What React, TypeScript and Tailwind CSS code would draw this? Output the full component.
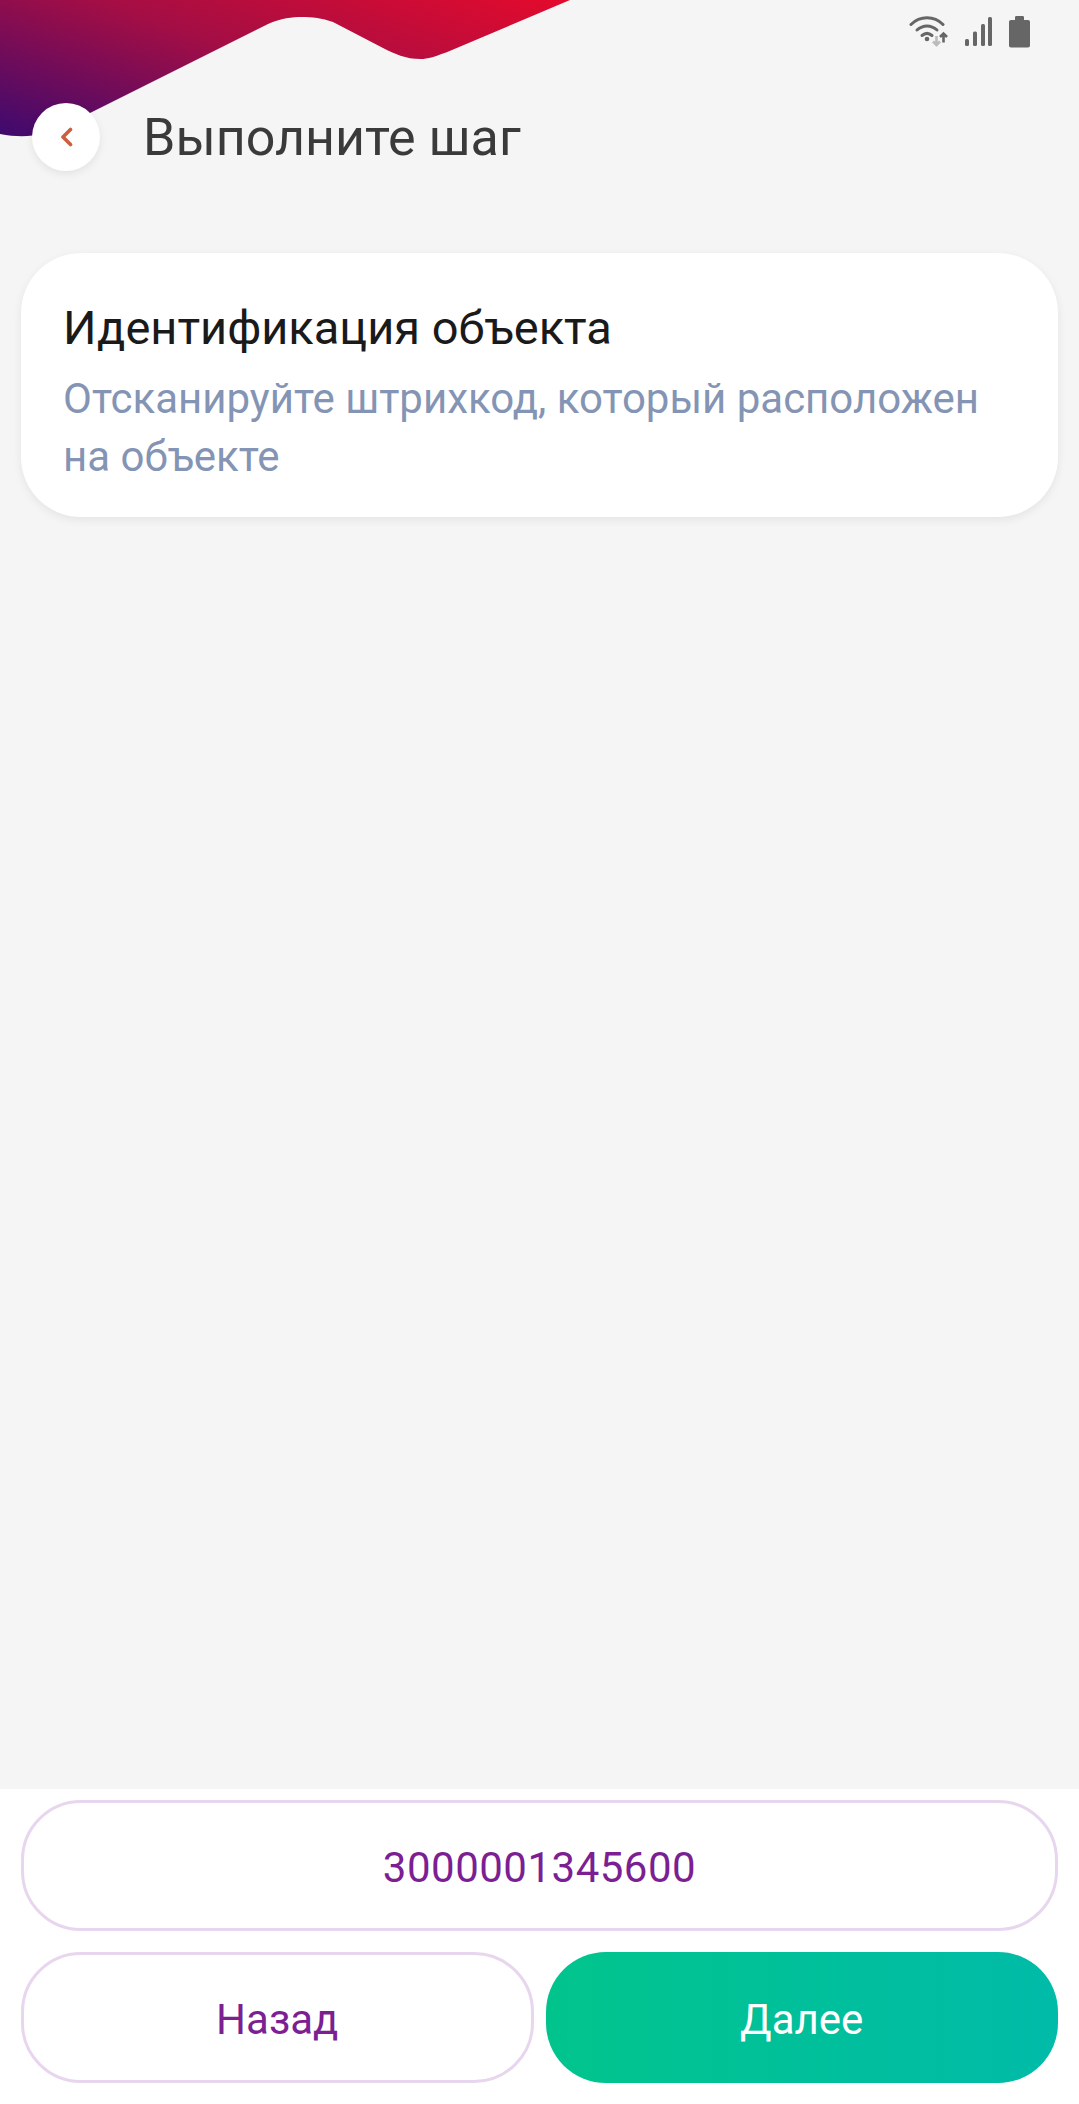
import React from "react";

const font = "font-['Roboto',sans-serif]";

const StatusIcons = () => (
  <div className="flex items-start justify-end gap-[17px] pt-[14px] pr-[49px] h-[103px]">
    <svg width="39" height="34" viewBox="0 0 39 34" fill="none">
      <path d="M2 10.5C11 1.5 25 1.5 34 10.5" stroke="#666" strokeWidth="3" strokeLinecap="round" />
      <path d="M8 16C14 10.5 22 10.5 28 16" stroke="#666" strokeWidth="3" strokeLinecap="round" />
      <path d="M13 21.5C16.5 18.5 19.5 18.5 23 21.5" stroke="#666" strokeWidth="3" strokeLinecap="round" />
      <circle cx="18" cy="25" r="2.3" fill="#666" />
      <path d="M27.5 22V32M24 26.5L27.5 23L31 26.5" stroke="#bbb" strokeWidth="2.6" transform="rotate(180 27.5 27)" />
      <path d="M37 20V29M33.500 23.500L37 20L40.500 23.500" stroke="#666" strokeWidth="2.6" transform="translate(-2.500 -.500)" />
    </svg>
    <svg width="27" height="31" viewBox="0 0 27 31" className="mt-[2px]" fill="#666">
      <rect x="0" y="23" width="4" height="7" rx="1.500" />
      <rect x="8" y="15.500" width="4" height="14.500" rx="1.500" />
      <rect x="16" y="8" width="4" height="22" rx="1.500" />
      <rect x="23" y="1" width="4" height="29" rx="1.500" />
    </svg>
    <svg width="21" height="33" viewBox="0 0 21 33" className="mt-[1px]" fill="#666">
      <path d="M6 2.500C6 1.500 6.500 1 7.500 1H13.500C14.500 1 15 1.500 15 2.500V5H19C20.200 5 21 5.800 21 7V30.500C21 31.700 20.200 32.500 19 32.500H2C.800 32.500 0 31.700 0 30.500V7C0 5.800.800 5 2 5H6Z" />
    </svg>
  </div>
);

const Wave = () => (
  <svg className="absolute top-0 left-0" width="580" height="140" viewBox="0 0 580 140">
    <defs>
      <linearGradient id="wave" gradientUnits="userSpaceOnUse" x1="0" y1="134" x2="104" y2="-163">
        <stop offset="0" stopColor="#3f0a6e" />
        <stop offset="0.5" stopColor="#a30e45" />
        <stop offset="1" stopColor="#e40a2c" />
      </linearGradient>
    </defs>
    <path
      d="M0 0H570L452 50C435 57 427 59 421 59C405 59 395 54 383 48L333 22C322 18 312 17 302 17C292 17 281 18 268 24L92 112L60 128C45 135 25 139 0 134Z"
      fill="url(#wave)"
    />
  </svg>
);

export default function App() {
  return (
    <div className={`${font} relative w-[1079px] h-[2104px] bg-[#f5f5f5] flex flex-col overflow-hidden`}>
      <Wave />
      <div className="relative flex flex-col">
        <StatusIcons />
        <div className="flex items-center pl-[32px]">
          <button className="w-[68px] h-[68px] rounded-full bg-white shadow-[0_3px_8px_rgba(0,0,0,0.08)] flex items-center justify-center">
            <svg width="13" height="20" viewBox="0 0 13 20" fill="none">
              <path d="M10.500 2.500L3 10L10.500 17.500" stroke="#cb5f3e" strokeWidth="3.600" strokeLinecap="round" strokeLinejoin="round" />
            </svg>
          </button>
          <h1 className="ml-[43px] text-[52px] leading-[66px] pt-[2px] text-[#3a3a3a]">Выполните шаг</h1>
        </div>
      </div>

      <div className="mx-[21px] mt-[82px] h-[264px] rounded-[60px] bg-white shadow-[0_3px_10px_rgba(0,0,0,0.07)] pl-[42px] pr-[70px] pt-[45px]">
        <h2 className="text-[47px] leading-[60px] text-[#1a1a1a]">Идентификация объекта</h2>
        <p className="text-[42px] leading-[58px] text-[#8494b4] mt-[12px]">Отсканируйте штрихкод, который расположен на объекте</p>
      </div>

      <div className="mt-auto h-[315px] bg-white px-[21px] pt-[11px] flex flex-col gap-[21px]">
        <button className="h-[131px] pt-[4px] rounded-[60px] border-[3px] border-[#e8d6ee] text-[42px] tracking-[0.5px] text-[#7b1f93]">3000001345600</button>
        <div className="grid grid-cols-2 gap-[12px]">
          <button className="h-[131px] pt-[4px] rounded-[60px] border-[3px] border-[#e8d6ee] text-[42px] text-[#7b1f93]">Назад</button>
          <button className="h-[131px] pt-[4px] rounded-[60px] bg-gradient-to-r from-[#01c48c] to-[#00bba8] text-[42px] text-white">Далее</button>
        </div>
      </div>
    </div>
  );
}
